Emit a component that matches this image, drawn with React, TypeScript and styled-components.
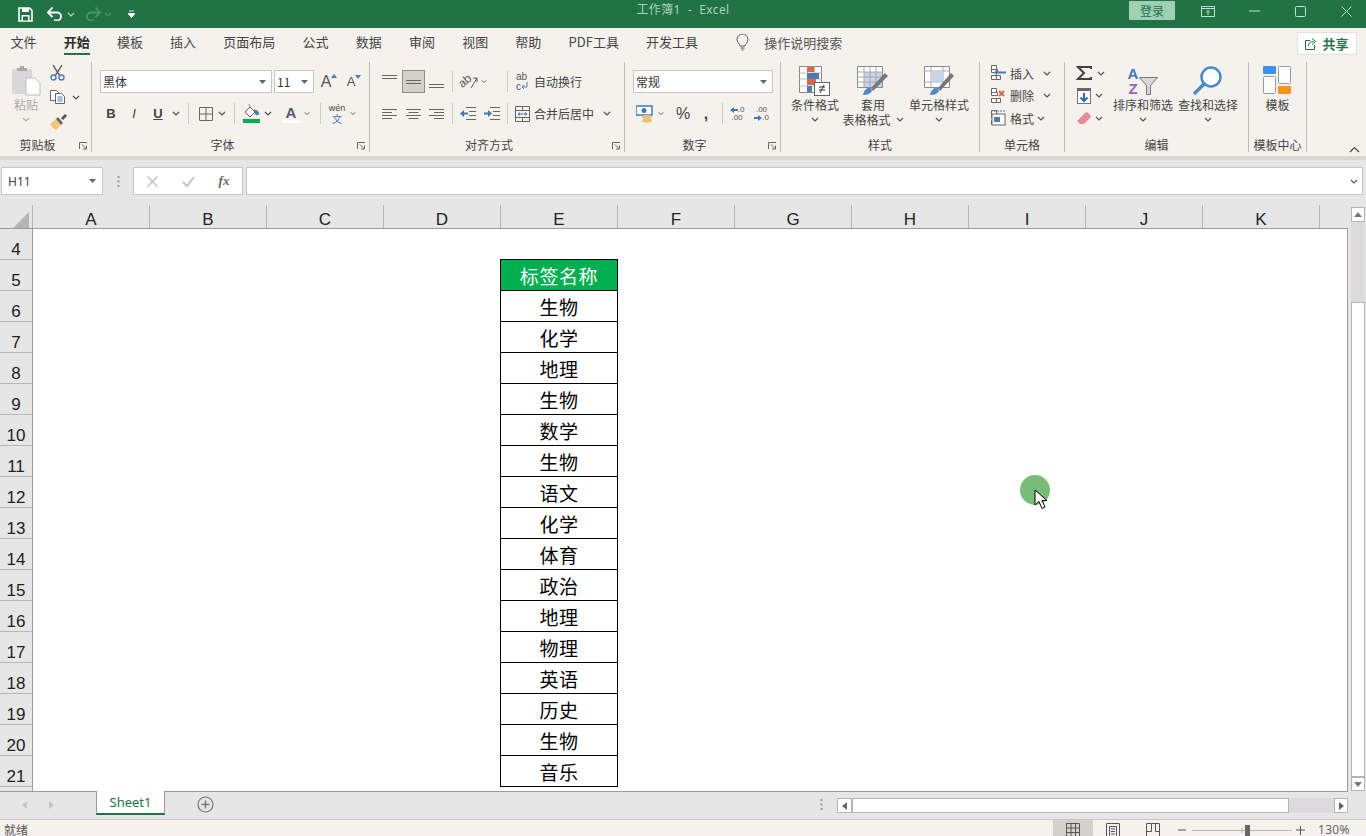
import React from 'react';
import styled, { createGlobalStyle } from 'styled-components';

const UI_FONT = '"Noto Sans", "Noto Sans CJK SC", sans-serif';
const CJK_FONT = '"Noto Sans CJK SC", "Noto Sans", sans-serif';

const GlobalStyle = createGlobalStyle`
    html, body {
        margin: 0;
        padding: 0;
        background: #e6e6e6;
        overflow: hidden;
    }
    * {
        box-sizing: border-box;
    }
`;

const Page = styled.div`
    position: relative;
    width: 1366px;
    height: 836px;
    display: flex;
    flex-direction: column;
    overflow: hidden;
    font-family: ${CJK_FONT};
    color: #444;
`;

/* title bar */
const TitleBar = styled.div`
    height: 28px;
    flex: none;
    display: grid;
    grid-template-columns: 1fr auto 1fr;
    align-items: center;
    background: #217346;
`;

const QuickAccess = styled.div`
    display: flex;
    align-items: center;
    padding-left: 18px;
`;

const QuickSlot = styled.span<{ $w: number; $ml?: number }>`
    display: inline-flex;
    justify-content: center;
    align-items: center;
    width: ${(p) => p.$w}px;
    margin-left: ${(p) => p.$ml ?? 0}px;
`;

const TitleText = styled.div`
    font-family: ${UI_FONT};
    font-size: 12px;
    line-height: 20px;
    letter-spacing: 0.4px;
    color: #a8d2bc;
    white-space: pre;
    margin-top: -8px;
`;

const WindowControls = styled.div`
    display: flex;
    align-items: flex-start;
    justify-content: flex-end;
    height: 28px;
    padding-top: 1px;
    margin-right: -3px;
`;

const LoginButton = styled.div`
    width: 46px;
    height: 19px;
    margin-right: 10px;
    border-radius: 1px;
    background: #9fd0b5;
    color: #217346;
    font-size: 12px;
    line-height: 19px;
    text-align: center;
`;

const WindowButton = styled.span`
    width: 46px;
    height: 20px;
    flex: none;
    display: inline-flex;
    align-items: center;
    justify-content: center;
`;

/* tab row */
const TabRow = styled.div`
    height: 30px;
    flex: none;
    display: flex;
    align-items: flex-start;
    padding-left: 10.5px;
    background: #f5f2ee;
`;

const Tab = styled.div<{ $active?: boolean }>`
    margin-right: 27.2px;
    height: 27px;
    font-size: 13px;
    line-height: 28px;
    white-space: nowrap;
    color: ${(p) => (p.$active ? '#2b2b2b' : '#444')};
    font-weight: ${(p) => (p.$active ? 700 : 400)};
    border-bottom: 2px solid ${(p) => (p.$active ? '#217346' : 'transparent')};
`;

const SearchHint = styled.div`
    display: flex;
    align-items: center;
    gap: 15px;
    margin-left: 11px;
    height: 29px;
    font-size: 13px;
    color: #555;
`;

const ShareButton = styled.div`
    margin-left: auto;
    margin-right: 9px;
    margin-top: 4px;
    width: 60px;
    height: 23px;
    display: flex;
    align-items: center;
    justify-content: center;
    gap: 5px;
    background: #fff;
    border: 1px solid #eadfdf;
    color: #217346;
    font-size: 13px;
    font-weight: 700;
`;

/* ribbon */
const Ribbon = styled.div`
    height: 98px;
    flex: none;
    display: flex;
    padding-top: 4px;
    background: #f5f2ee;
`;

const Group = styled.div<{ $w: number }>`
    width: ${(p) => p.$w}px;
    height: 90px;
    flex: none;
    display: flex;
    flex-direction: column;
    border-right: 1px solid #bdbbb8;
`;

const GroupBody = styled.div<{ $row?: boolean }>`
    height: 75px;
    display: flex;
    flex-direction: ${(p) => (p.$row ? 'row' : 'column')};
`;

const GroupFooter = styled.div`
    height: 15px;
    display: flex;
    align-items: center;
    font-size: 12px;
    line-height: 15px;
    color: #444;
`;

const GroupLabel = styled.span`
    flex: 1;
    text-align: center;
    white-space: nowrap;
`;

const Launcher = styled.span`
    width: 16px;
    display: inline-flex;
    justify-content: center;
    padding-top: 3px;
`;

const CollapseSlot = styled.div`
    flex: 1;
    display: flex;
    align-items: flex-end;
    justify-content: flex-end;
    padding: 0 6px 3px 0;
`;

const ToolRows = styled.div<{ $top?: number; $gap?: number }>`
    display: flex;
    flex-direction: column;
    padding-top: ${(p) => p.$top ?? 8}px;
    gap: ${(p) => p.$gap ?? 9}px;
`;

const ToolRow = styled.div<{ $ml?: number; $h?: number }>`
    display: flex;
    align-items: center;
    height: ${(p) => p.$h ?? 23}px;
    padding-left: ${(p) => p.$ml ?? 0}px;
`;

const Tool = styled.span<{ $w: number; $ml?: number; $active?: boolean }>`
    flex: none;
    width: ${(p) => p.$w}px;
    height: 23px;
    margin-left: ${(p) => p.$ml ?? 0}px;
    display: inline-flex;
    align-items: center;
    justify-content: center;
    background: ${(p) => (p.$active ? '#d3d1cc' : 'transparent')};
    border: 1px solid ${(p) => (p.$active ? '#8f8e8a' : 'transparent')};
`;

const LetterTool = styled(Tool)<{ $bold?: boolean; $italic?: boolean; $under?: boolean; $size?: number }>`
    font-family: "Liberation Sans", sans-serif;
    font-size: ${(p) => p.$size ?? 13}px;
    color: #444;
    font-weight: ${(p) => (p.$bold ? 700 : 400)};
    font-style: ${(p) => (p.$italic ? 'italic' : 'normal')};
    text-decoration: ${(p) => (p.$under ? 'underline' : 'none')};
`;

/* small letters that are part of a ribbon icon */
const GlyphStack = styled.span<{ $align?: string; $gap?: number }>`
    display: inline-flex;
    flex-direction: column;
    align-items: ${(p) => p.$align ?? 'center'};
    gap: ${(p) => p.$gap ?? 0}px;
`;

const GlyphLine = styled.span`
    display: inline-flex;
    align-items: flex-start;
`;

const Glyph = styled.span<{ $size: number; $color?: string; $bold?: boolean; $cjk?: boolean; $tilt?: number }>`
    font-family: ${(p) => (p.$cjk ? CJK_FONT : '"Liberation Sans", sans-serif')};
    font-size: ${(p) => p.$size}px;
    line-height: ${(p) => p.$size}px;
    color: ${(p) => p.$color ?? '#555'};
    font-weight: ${(p) => (p.$bold ? 700 : 400)};
    transform: ${(p) => (p.$tilt ? `rotate(${p.$tilt}deg)` : 'none')};
    white-space: nowrap;
`;

const VSep = styled.span<{ $ml: number; $mr: number }>`
    flex: none;
    width: 1px;
    height: 21px;
    margin-left: ${(p) => p.$ml}px;
    margin-right: ${(p) => p.$mr}px;
    background: #cfcdc9;
`;

const ComboBox = styled.div<{ $w: number; $ml?: number }>`
    width: ${(p) => p.$w}px;
    height: 23px;
    margin-left: ${(p) => p.$ml ?? 0}px;
    display: flex;
    align-items: center;
    justify-content: space-between;
    padding: 0 5px 0 2px;
    background: #fff;
    border: 1px solid #c6c6c6;
    font-size: 12px;
    color: #333;
`;

const WordTool = styled.span<{ $ml?: number; $gap?: number }>`
    display: inline-flex;
    align-items: center;
    gap: ${(p) => p.$gap ?? 4}px;
    margin-left: ${(p) => p.$ml ?? 0}px;
    font-size: 12px;
    white-space: nowrap;
    color: #444;
`;

const ChevronSlot = styled.span<{ $ml?: number }>`
    display: inline-flex;
    width: 8px;
    justify-content: center;
    margin-left: ${(p) => p.$ml ?? 0}px;
`;

const LargeButton = styled.div<{ $w: number; $ml?: number; $dim?: boolean }>`
    width: ${(p) => p.$w}px;
    flex: none;
    margin-left: ${(p) => p.$ml ?? 0}px;
    padding-top: 4px;
    display: flex;
    flex-direction: column;
    align-items: center;
    font-size: 12px;
    line-height: 15px;
    white-space: nowrap;
    color: ${(p) => (p.$dim ? '#a9a9a9' : '#444')};
`;

const LargeIcon = styled.div`
    height: 30px;
    margin-bottom: 1px;
    display: flex;
    align-items: flex-start;
    justify-content: center;
`;

const SortIcon = styled.div`
    display: flex;
    align-items: flex-end;
    gap: 1px;
    height: 30px;
`;

const LabelLine = styled.div`
    height: 15px;
    display: flex;
    align-items: center;
    gap: 5px;
`;

const ClipColumn = styled.div`
    display: flex;
    flex-direction: column;
    padding: 0 0 0 1px;
    gap: 3.5px;
`;

const ClipRow = styled.div`
    height: 21px;
    display: flex;
    align-items: center;
    gap: 6px;
`;

/* formula bar */
const Shadow = styled.div`
    height: 4px;
    flex: none;
    background: #d9d6d2;
`;

const FormulaBar = styled.div`
    height: 45px;
    flex: none;
    display: flex;
    align-items: flex-start;
    padding: 7px 3px 0 1px;
    background: #e6e6e6;
`;

const NameBox = styled.div`
    width: 102px;
    height: 28px;
    display: flex;
    align-items: center;
    justify-content: space-between;
    padding: 0 6px;
    background: #fff;
    border: 1px solid #c6c6c6;
    font-family: ${UI_FONT};
    font-size: 12px;
    color: #444;
`;

const GripSlot = styled.div`
    width: 30px;
    height: 28px;
    display: flex;
    align-items: center;
    justify-content: center;
`;

const FormulaButtons = styled.div`
    width: 110px;
    height: 28px;
    display: grid;
    grid-template-columns: repeat(3, 36px);
    align-items: center;
    justify-items: center;
    background: #fff;
    border: 1px solid #c6c6c6;
`;

const FxText = styled.span`
    font-family: "Liberation Serif", serif;
    font-style: italic;
    font-weight: 700;
    font-size: 13px;
    color: #666;
`;

const FormulaInput = styled.div`
    flex: 1;
    height: 28px;
    margin-left: 3px;
    display: flex;
    align-items: center;
    justify-content: flex-end;
    padding-right: 4px;
    background: #fff;
    border: 1px solid #c6c6c6;
`;

/* sheet */
const SheetArea = styled.div`
    height: 587px;
    flex: none;
    display: flex;
    background: #e6e6e6;
`;

const SheetMain = styled.div`
    width: 1348px;
    display: flex;
    flex-direction: column;
`;

const ColumnHeader = styled.div`
    height: 24px;
    flex: none;
    display: flex;
    border-bottom: 1px solid #9c9c9c;
`;

const Corner = styled.div`
    width: 33px;
    flex: none;
    padding: 4px 0 0 13px;
    border-right: 1px solid #b5b5b5;
`;

const ColumnCell = styled.div<{ $w: number }>`
    width: ${(p) => p.$w}px;
    flex: none;
    padding-top: 5px;
    text-align: center;
    font-family: "Liberation Sans", sans-serif;
    font-size: 17px;
    line-height: 20px;
    color: #222;
    border-right: 1px solid #b5b5b5;
`;

const SheetBody = styled.div`
    flex: 1;
    display: flex;
    overflow: hidden;
    border-bottom: 1px solid #9c9c9c;
`;

const RowHeader = styled.div`
    width: 33px;
    flex: none;
    border-right: 1px solid #9c9c9c;
`;

const RowCell = styled.div`
    height: 31px;
    flex: none;
    display: flex;
    align-items: flex-end;
    justify-content: center;
    font-family: "Liberation Sans", sans-serif;
    font-size: 17px;
    line-height: 18px;
    color: #222;
    border-bottom: 1px solid #b8b8b8;
`;

const Canvas = styled.div`
    flex: 1;
    padding: 30px 0 0 467px;
    background: #fff;
    border-right: 1px solid #9c9c9c;
`;

const DataTable = styled.div`
    width: 118px;
    border: 1px solid #000;
    border-bottom: 0;
`;

const DataCell = styled.div<{ $head?: boolean }>`
    height: 31px;
    display: flex;
    align-items: center;
    justify-content: center;
    border-bottom: 1px solid #000;
    font-size: 19px;
    letter-spacing: ${(p) => (p.$head ? '0.6px' : '0.5px')};
    background: ${(p) => (p.$head ? '#00b050' : '#fff')};
    color: ${(p) => (p.$head ? '#fff' : '#000')};
`;

const VScroll = styled.div`
    width: 18px;
    flex: none;
    display: flex;
    flex-direction: column;
    padding: 2px 1px 1px 3px;
`;

const ScrollButton = styled.div<{ $w?: number; $h?: number }>`
    width: ${(p) => (p.$w ? `${p.$w}px` : '100%')};
    height: ${(p) => (p.$h ? `${p.$h}px` : '100%')};
    flex: none;
    display: flex;
    align-items: center;
    justify-content: center;
    background: #fff;
    border: 1px solid #b5b5b5;
`;

const ScrollTrack = styled.div<{ $flex: number }>`
    flex: ${(p) => p.$flex};
    background: #dcdadc;
`;

const ScrollThumb = styled.div<{ $flex: number }>`
    flex: ${(p) => p.$flex};
    background: #fff;
    border: 1px solid #b5b5b5;
`;

/* sheet tabs */
const SheetTabs = styled.div`
    height: 28px;
    flex: none;
    display: flex;
    align-items: flex-start;
    background: #e6e6e6;
    border-bottom: 1px solid #c6c6c6;
`;

const TabNav = styled.div`
    width: 96px;
    height: 26px;
    display: flex;
    align-items: center;
    gap: 22px;
    padding-left: 22px;
`;

const SheetTab = styled.div`
    width: 69px;
    height: 24px;
    background: #fff;
    border-left: 1px solid #9c9c9c;
    border-right: 1px solid #9c9c9c;
    border-bottom: 2px solid #217346;
    margin-top: -1px;
    text-align: center;
    font-family: ${UI_FONT};
    font-size: 13px;
    line-height: 23px;
    color: #217346;
`;

const AddSheet = styled.span`
    display: inline-flex;
    margin: 4px 0 0 32px;
`;

const GripRight = styled.span`
    display: inline-flex;
    margin: 7px 0 0 606px;
`;

const HScroll = styled.div`
    width: 511px;
    height: 15px;
    display: flex;
    margin: 6px 0 0 14px;
`;

/* status bar */
const StatusBar = styled.div`
    height: 16px;
    flex: none;
    display: flex;
    align-items: flex-start;
    overflow: hidden;
    padding-left: 4px;
    background: linear-gradient(#f5f2ee 70%, #f7efef);
    font-size: 12px;
    line-height: 20px;
    color: #555;
`;

const StatusRight = styled.div`
    margin-left: auto;
    display: flex;
    align-items: flex-start;
    height: 16px;
`;

const ViewButton = styled.span<{ $active?: boolean }>`
    width: 40px;
    height: 16px;
    display: inline-flex;
    justify-content: center;
    padding-top: 3px;
    background: ${(p) => (p.$active ? '#d3d1cc' : 'transparent')};
`;

const ZoomSlider = styled.div`
    display: flex;
    align-items: flex-start;
    margin: 0 12px 0 5px;
    padding-top: 5px;
`;

const ZoomText = styled.span`
    width: 48px;
    font-family: ${UI_FONT};
    font-size: 12px;
    line-height: 20px;
    letter-spacing: 0.3px;
    color: #666;
`;

/* recording cursor lies over the sheet */
const ClickMark = styled.div`
    position: absolute;
    left: 1020px;
    top: 475px;
    width: 30px;
    height: 30px;
    border-radius: 50%;
    background: #78bc78;
`;

const CursorMark = styled.svg`
    position: absolute;
    left: 1034px;
    top: 489px;
`;

const Chevron: React.FC<{ color?: string }> = ({ color = '#555' }) => (
    <svg width="8" height="5" viewBox="0 0 8 5">
        <path d="M1 1l3 3 3-3" fill="none" stroke={color} strokeWidth="1.2" />
    </svg>
);

const Caret: React.FC<{ color?: string }> = ({ color = '#666' }) => (
    <svg width="7" height="4" viewBox="0 0 7 4">
        <path d="M0 0h7L3.5 4z" fill={color} />
    </svg>
);

const LauncherIcon = () => (
    <svg width="9" height="8" viewBox="0 0 9 8">
        <path d="M.5 7V.5H8M3 2.5l4 4M7.5 3.5v3.500H4" fill="none" stroke="#666" strokeWidth="1" />
    </svg>
);

const Lines: React.FC<{ widths: number[]; offs?: number[]; y?: number; gap?: number }> = ({
    widths,
    offs = [0, 0, 0, 0],
    y = 1.5,
    gap = 3,
}) => (
    <svg width="16" height="16" viewBox="0 0 16 16">
        {widths.map((w, i) => (w ? <rect key={i} x={offs[i]} y={y + i * gap} width={w} height="1" fill="#666" /> : null))}
    </svg>
);

const SmallGridIcon: React.FC<{ badge: 'insert' | 'delete' | 'format' }> = ({ badge }) => (
    <svg width="15" height="16" viewBox="0 0 15 16">
        <path d="M.5 4.500h6v3h-6zM.5 10.500h5v4h-5zM5.500 10.500h4v4h-4zM.5.5h5v4h-5z" fill="#fff" stroke="#666" />
        {badge === 'insert' && <path d="M3 7.500l3-3v2h9v2H6v2z" fill="#4a7db8" />}
        {badge === 'delete' && <path d="M8 3l5 5M13 3l-5 5" stroke="#e0604a" strokeWidth="2" />}
        {badge === 'format' && (
            <>
                <path d="M0 1h15" stroke="#4a7db8" strokeDasharray="2 1" />
                <rect x="1" y="4" width="13" height="11" fill="#fff" stroke="#666" />
                <rect x="3" y="7" width="6" height="5" fill="#4a7db8" />
            </>
        )}
    </svg>
);

const tabs = ['文件', '开始', '模板', '插入', '页面布局', '公式', '数据', '审阅', '视图', '帮助', 'PDF工具', '开发工具'];
const columns = ['A', 'B', 'C', 'D', 'E', 'F', 'G', 'H', 'I', 'J', 'K'];
const rowNumbers = [4, 5, 6, 7, 8, 9, 10, 11, 12, 13, 14, 15, 16, 17, 18, 19, 20, 21, 22];
const subjects = ['生物', '化学', '地理', '生物', '数学', '生物', '语文', '化学', '体育', '政治', '地理', '物理', '英语', '历史', '生物', '音乐'];

const App: React.FC = () => {
    return (
        <Page>
            <GlobalStyle />
            <TitleBar>
                <QuickAccess>
                    <QuickSlot $w={15}>
                        <svg width="15" height="15" viewBox="0 0 15 15">
                            <path d="M1 1h10.500L14 3.500V14H1z" fill="none" stroke="#fff" strokeWidth="1.6" />
                            <rect x="4" y="1" width="7" height="4" fill="#fff" />
                            <rect x="3.500" y="8" width="8" height="6" fill="#fff" />
                            <rect x="5" y="9.500" width="5" height="4" fill="#217346" />
                        </svg>
                    </QuickSlot>
                    <QuickSlot $w={16} $ml={14}>
                        <svg width="16" height="14" viewBox="0 0 16 14">
                            <path d="M1 5.500h9a4 4 0 0 1 0 8H7" fill="none" stroke="#fff" strokeWidth="1.800" />
                            <path d="M5.500.5L1 5.500l4.500 4.500" fill="none" stroke="#fff" strokeWidth="1.800" />
                        </svg>
                    </QuickSlot>
                    <QuickSlot $w={8} $ml={4}>
                        <Chevron color="#b5d6c5" />
                    </QuickSlot>
                    <QuickSlot $w={16} $ml={10}>
                        <svg width="16" height="14" viewBox="0 0 16 14">
                            <path d="M15 5.500H6a4 4 0 0 0 0 8h3" fill="none" stroke="#4c9070" strokeWidth="1.800" />
                            <path d="M10.500.5L15 5.500 10.500 10" fill="none" stroke="#4c9070" strokeWidth="1.800" />
                        </svg>
                    </QuickSlot>
                    <QuickSlot $w={8} $ml={3}>
                        <Chevron color="#4c9070" />
                    </QuickSlot>
                    <QuickSlot $w={8} $ml={15}>
                        <svg width="7" height="8" viewBox="0 0 7 8">
                            <path d="M1 1h5M0 3.500h7L3.500 7.500z" stroke="#fff" fill="#fff" strokeWidth=".8" />
                        </svg>
                    </QuickSlot>
                </QuickAccess>
                <TitleText>工作簿1  -  Excel</TitleText>
                <WindowControls>
                    <LoginButton>登录</LoginButton>
                    <WindowButton>
                        <svg width="14" height="11" viewBox="0 0 14 11">
                            <path d="M.5.5h13v10H.5zM.5 2.500h13M7 9V4.500M5 6.500l2-2 2 2" fill="none" stroke="#c5e0d2" />
                        </svg>
                    </WindowButton>
                    <WindowButton>
                        <svg width="11" height="2" viewBox="0 0 11 2">
                            <path d="M0 1h11" stroke="#c5e0d2" />
                        </svg>
                    </WindowButton>
                    <WindowButton>
                        <svg width="11" height="11" viewBox="0 0 11 11">
                            <rect x=".5" y=".5" width="10" height="10" rx="1" fill="none" stroke="#c5e0d2" />
                        </svg>
                    </WindowButton>
                    <WindowButton>
                        <svg width="11" height="11" viewBox="0 0 11 11">
                            <path d="M.5.5l10 10M10.500.5l-10 10" stroke="#c5e0d2" />
                        </svg>
                    </WindowButton>
                </WindowControls>
            </TitleBar>

            <TabRow>
                {tabs.map((tab) => (
                    <Tab key={tab} $active={tab === '开始'}>
                        {tab}
                    </Tab>
                ))}
                <SearchHint>
                    <svg width="13" height="17" viewBox="0 0 13 17">
                        <path d="M4 12c0-2-3-3.500-3-6.500a5.500 5.500 0 0 1 11 0c0 3-3 4.500-3 6.500zM4.500 14h4M5.500 16h2" fill="none" stroke="#555" />
                    </svg>
                    <span>操作说明搜索</span>
                </SearchHint>
                <ShareButton>
                    <svg width="12" height="12" viewBox="0 0 12 12">
                        <path d="M5 2.500H.5v9h9V7M3.500 8c0-3 2-4.500 5-4.500M7 .5l3.500 3L7 6.500" fill="none" stroke="#217346" />
                    </svg>
                    <span>共享</span>
                </ShareButton>
            </TabRow>

            <Ribbon>
                <Group $w={92}>
                    <GroupBody $row>
                        <LargeButton $w={46} $ml={3} $dim>
                            <LargeIcon>
                                <svg width="30" height="30" viewBox="0 0 30 30">
                                    <rect x="1" y="3" width="20" height="25" rx="1.500" fill="#d8d8db" />
                                    <path d="M6 5h10V2h-3V0H9v2H6z" fill="#a8a8a8" />
                                    <path d="M15 12h9l5 5v12H15z" fill="#fff" stroke="#bbb" />
                                </svg>
                            </LargeIcon>
                            <LabelLine>粘贴</LabelLine>
                            <LabelLine>
                                <Chevron color="#aaa" />
                            </LabelLine>
                        </LargeButton>
                        <ClipColumn>
                            <ClipRow>
                                <svg width="15" height="16" viewBox="0 0 15 16">
                                    <path d="M3 0l7 11M12 0L5 11" stroke="#666" strokeWidth="1.400" />
                                    <circle cx="3.500" cy="12.500" r="2.500" fill="none" stroke="#4a7db8" strokeWidth="1.400" />
                                    <circle cx="11.500" cy="12.500" r="2.500" fill="none" stroke="#4a7db8" strokeWidth="1.400" />
                                </svg>
                            </ClipRow>
                            <ClipRow>
                                <svg width="16" height="14" viewBox="0 0 16 14">
                                    <path d="M.5.5h6l3 3v7h-9z" fill="#fff" stroke="#666" />
                                    <path d="M5.500 3.500h6l3 3v7h-9z" fill="#fff" stroke="#666" />
                                    <path d="M7.500 7h5M7.500 9h5M7.500 11h5" stroke="#4a7db8" />
                                </svg>
                                <Chevron />
                            </ClipRow>
                            <ClipRow>
                                <svg width="17" height="16" viewBox="0 0 17 16">
                                    <path d="M0 10l6-5 5 6-5 5c-2-1-5-3-6-6z" fill="#f2c57c" />
                                    <path d="M6 5l5 6 2-2-5-6z" fill="#666" />
                                    <path d="M11 4l4-4 2 2-4 4z" fill="#555" />
                                </svg>
                            </ClipRow>
                        </ClipColumn>
                    </GroupBody>
                    <GroupFooter>
                        <GroupLabel>剪贴板</GroupLabel>
                        <Launcher>
                            <LauncherIcon />
                        </Launcher>
                    </GroupFooter>
                </Group>

                <Group $w={278}>
                    <GroupBody>
                        <ToolRows>
                            <ToolRow $ml={8}>
                                <ComboBox $w={172}>
                                    <span>黑体</span>
                                    <Caret />
                                </ComboBox>
                                <ComboBox $w={40} $ml={2}>
                                    <span>11</span>
                                    <Caret />
                                </ComboBox>
                                <Tool $w={22} $ml={4}>
                                    <GlyphLine>
                                        <Glyph $size={16}>A</Glyph>
                                        <svg width="6" height="4" viewBox="0 0 6 4">
                                            <path d="M0 4l3-4 3 4z" fill="#4a7db8" />
                                        </svg>
                                    </GlyphLine>
                                </Tool>
                                <Tool $w={22} $ml={3}>
                                    <GlyphLine>
                                        <Glyph $size={13}>A</Glyph>
                                        <svg width="6" height="4" viewBox="0 0 6 4">
                                            <path d="M0 0l3 4 3-4z" fill="#4a7db8" />
                                        </svg>
                                    </GlyphLine>
                                </Tool>
                            </ToolRow>
                            <ToolRow $ml={8}>
                                <LetterTool $w={22} $bold>B</LetterTool>
                                <LetterTool $w={24} $italic>I</LetterTool>
                                <LetterTool $w={24} $bold $under>U</LetterTool>
                                <Tool $w={12}><Chevron /></Tool>
                                <VSep $ml={6} $mr={6} />
                                <Tool $w={21}>
                                    <svg width="14" height="14" viewBox="0 0 14 14">
                                        <path d="M.5.5h13v13H.5zM7 .5v13M.5 7h13" fill="none" stroke="#666" />
                                    </svg>
                                </Tool>
                                <Tool $w={12}><Chevron /></Tool>
                                <VSep $ml={6} $mr={6} />
                                <Tool $w={21}>
                                    <svg width="17" height="19" viewBox="0 0 17 19">
                                        <path d="M2 8l5-5 5 5-5 5z" fill="#fff" stroke="#666" />
                                        <path d="M6 0l1 4M11 6c3 0 5 2 5 4l-3 1z" stroke="#666" fill="#4a7db8" strokeWidth=".7" />
                                        <rect x="0" y="15" width="17" height="4" fill="#00b050" />
                                    </svg>
                                </Tool>
                                <Tool $w={12}><Chevron /></Tool>
                                <Tool $w={24} $ml={5}>
                                    <GlyphStack>
                                        <Glyph $size={15} $bold $color="#56596e">A</Glyph>
                                        <svg width="17" height="3" viewBox="0 0 17 3">
                                            <rect width="17" height="3" fill="#fff" />
                                        </svg>
                                    </GlyphStack>
                                </Tool>
                                <Tool $w={8}><Chevron /></Tool>
                                <VSep $ml={9} $mr={4} />
                                <Tool $w={24}>
                                    <GlyphStack $gap={1}>
                                        <Glyph $size={9} $color="#444">wén</Glyph>
                                        <Glyph $size={10} $cjk $color="#3f78bb">文</Glyph>
                                    </GlyphStack>
                                </Tool>
                                <Tool $w={8}><Chevron /></Tool>
                            </ToolRow>
                        </ToolRows>
                    </GroupBody>
                    <GroupFooter>
                        <GroupLabel>字体</GroupLabel>
                        <Launcher>
                            <LauncherIcon />
                        </Launcher>
                    </GroupFooter>
                </Group>

                <Group $w={255}>
                    <GroupBody>
                        <ToolRows>
                            <ToolRow $ml={8}>
                                <Tool $w={24}><Lines widths={[15, 15]} y={1} /></Tool>
                                <Tool $w={23} $active><Lines widths={[15, 15]} y={6} /></Tool>
                                <Tool $w={24}><Lines widths={[15, 15]} y={10} /></Tool>
                                <VSep $ml={3} $mr={3} />
                                <Tool $w={24}>
                                    <GlyphLine>
                                        <Glyph $size={12} $tilt={-40}>ab</Glyph>
                                        <svg width="7" height="14" viewBox="0 0 7 14">
                                            <path d="M0 13L6 3M6 3H2M6 3v4" fill="none" stroke="#555" />
                                        </svg>
                                    </GlyphLine>
                                </Tool>
                                <Tool $w={8}><Chevron /></Tool>
                                <VSep $ml={19} $mr={8} />
                                <WordTool $gap={6}>
                                    <GlyphStack $align="flex-start">
                                        <Glyph $size={10}>ab</Glyph>
                                        <GlyphLine>
                                            <Glyph $size={10}>c</Glyph>
                                            <svg width="7" height="9" viewBox="0 0 7 9">
                                                <path d="M6 0v5H1M3 3L1 5l2 2" fill="none" stroke="#4a7db8" />
                                            </svg>
                                        </GlyphLine>
                                    </GlyphStack>
                                    自动换行
                                </WordTool>
                            </ToolRow>
                            <ToolRow $ml={8}>
                                <Tool $w={24}><Lines widths={[15, 10, 15, 10]} y={3} /></Tool>
                                <Tool $w={23}><Lines widths={[15, 10, 15, 10]} offs={[0, 2.5, 0, 2.5]} y={3} /></Tool>
                                <Tool $w={24}><Lines widths={[15, 10, 15, 10]} offs={[0, 5, 0, 5]} y={3} /></Tool>
                                <VSep $ml={3} $mr={3} />
                                <Tool $w={24}>
                                    <svg width="16" height="13" viewBox="0 0 16 13">
                                        <path d="M6 .5h10M9 4.500h7M9 8.500h7M6 12.500h10" stroke="#666" />
                                        <path d="M0 6.500l4-3.500v2.500h4v2H4V10z" fill="#3f78bb" />
                                    </svg>
                                </Tool>
                                <Tool $w={24}>
                                    <svg width="16" height="13" viewBox="0 0 16 13">
                                        <path d="M6 .5h10M9 4.500h7M9 8.500h7M6 12.500h10" stroke="#666" />
                                        <path d="M8 6.500L4 3v2.500H0v2h4V10z" fill="#3f78bb" />
                                    </svg>
                                </Tool>
                                <VSep $ml={3} $mr={7} />
                                <WordTool $gap={4}>
                                    <svg width="15" height="16" viewBox="0 0 15 16">
                                        <path d="M.5.5h14v15H.5zM.5 4.500h14M.5 11.500h14M7.500.5v4M7.500 11.500v4" fill="none" stroke="#666" />
                                        <path d="M3 8h9M3 8l2-1.500M3 8l2 1.500M12 8l-2-1.500M12 8l-2 1.500" fill="none" stroke="#3f78bb" />
                                    </svg>
                                    合并后居中
                                </WordTool>
                                <ChevronSlot $ml={9}><Chevron /></ChevronSlot>
                            </ToolRow>
                        </ToolRows>
                    </GroupBody>
                    <GroupFooter>
                        <GroupLabel>对齐方式</GroupLabel>
                        <Launcher>
                            <LauncherIcon />
                        </Launcher>
                    </GroupFooter>
                </Group>

                <Group $w={156}>
                    <GroupBody>
                        <ToolRows>
                            <ToolRow>
                                <ComboBox $w={140} $ml={8}>
                                    <span>常规</span>
                                    <Caret />
                                </ComboBox>
                            </ToolRow>
                            <ToolRow $ml={8}>
                                <Tool $w={22}>
                                    <svg width="17" height="18" viewBox="0 0 17 18">
                                        <rect x="0" y="1" width="16" height="9" fill="#fff" stroke="#3f78bb" strokeWidth="1.500" />
                                        <circle cx="8" cy="5.500" r="2.500" fill="#3f78bb" />
                                        <ellipse cx="11" cy="12" rx="5" ry="2" fill="#f0c277" />
                                        <ellipse cx="11" cy="15.500" rx="5" ry="2" fill="#f0c277" />
                                    </svg>
                                </Tool>
                                <Tool $w={8} $ml={2}><Chevron /></Tool>
                                <LetterTool $w={26} $ml={5} $size={16}>%</LetterTool>
                                <LetterTool $w={20} $bold $size={16}>,</LetterTool>
                                <VSep $ml={6} $mr={0} />
                                <Tool $w={28}>
                                    <GlyphStack>
                                        <GlyphLine>
                                            <svg width="8" height="8" viewBox="0 0 8 8">
                                                <path d="M0 4l4-3v2h4v2H4v2z" fill="#3f78bb" />
                                            </svg>
                                            <Glyph $size={8}>.0</Glyph>
                                        </GlyphLine>
                                        <Glyph $size={8}>.00</Glyph>
                                    </GlyphStack>
                                </Tool>
                                <Tool $w={21}>
                                    <GlyphStack>
                                        <Glyph $size={8}>.00</Glyph>
                                        <GlyphLine>
                                            <svg width="8" height="8" viewBox="0 0 8 8">
                                                <path d="M8 4L4 1v2H0v2h4v2z" fill="#3f78bb" />
                                            </svg>
                                            <Glyph $size={8}>.0</Glyph>
                                        </GlyphLine>
                                    </GlyphStack>
                                </Tool>
                            </ToolRow>
                        </ToolRows>
                    </GroupBody>
                    <GroupFooter>
                        <GroupLabel>数字</GroupLabel>
                        <Launcher>
                            <LauncherIcon />
                        </Launcher>
                    </GroupFooter>
                </Group>

                <Group $w={199}>
                    <GroupBody $row>
                        <LargeButton $w={56} $ml={6}>
                            <LargeIcon>
                                <svg width="32" height="30" viewBox="0 0 32 30">
                                    <path d="M.5.5h22v26H.5z" fill="#fff" stroke="#888" />
                                    <path d="M8.500.5v26M15.500.5v26M.5 7h22M.5 13h22M.5 20h22" stroke="#bbb" />
                                    <rect x="8" y="1" width="7" height="5" fill="#e0664a" />
                                    <rect x="8" y="7" width="12" height="6" fill="#4a7db8" />
                                    <rect x="8" y="13" width="9" height="6" fill="#e0664a" />
                                    <rect x="8" y="20" width="5" height="6" fill="#4a7db8" />
                                    <rect x="15.500" y="16.500" width="15" height="13" fill="#fff" stroke="#666" />
                                    <path d="M20 21h6M20 24h6M25 19l-4 8" stroke="#333" />
                                </svg>
                            </LargeIcon>
                            <LabelLine>条件格式</LabelLine>
                            <LabelLine><Chevron /></LabelLine>
                        </LargeButton>
                        <LargeButton $w={60}>
                            <LargeIcon>
                                <svg width="32" height="30" viewBox="0 0 32 30">
                                    <path d="M.5.5h25v21H.5z" fill="#fff" stroke="#888" />
                                    <rect x="7" y="6" width="18" height="15" fill="#c7d3e8" />
                                    <path d="M7 .5v21M13 .5v21M19 .5v21M.5 6h25M.5 11h25M.5 16h25" stroke="#aaa" />
                                    <path d="M6 29c1-5 4-8 8-7l1 3c-2 3-5 4-9 4z" fill="#4a8bc8" />
                                    <path d="M14 22L28 7l3 3-15 15z" fill="#777" />
                                </svg>
                            </LargeIcon>
                            <LabelLine>套用</LabelLine>
                            <LabelLine>表格格式<Chevron /></LabelLine>
                        </LargeButton>
                        <LargeButton $w={60} $ml={6}>
                            <LargeIcon>
                                <svg width="31" height="30" viewBox="0 0 31 30">
                                    <path d="M.5.5h25v21H.5z" fill="#fff" stroke="#888" />
                                    <path d="M.5 5h25M7 .5v21M19 .5v21M.5 16h25" stroke="#aaa" />
                                    <rect x="7" y="5" width="12" height="11" fill="#c7d3e8" />
                                    <path d="M6 29c1-5 4-8 8-7l1 3c-2 3-5 4-9 4z" fill="#4a8bc8" />
                                    <path d="M14 22L27 7l3 3-14 15z" fill="#777" />
                                </svg>
                            </LargeIcon>
                            <LabelLine>单元格样式</LabelLine>
                            <LabelLine><Chevron /></LabelLine>
                        </LargeButton>
                    </GroupBody>
                    <GroupFooter>
                        <GroupLabel>样式</GroupLabel>
                    </GroupFooter>
                </Group>

                <Group $w={85}>
                    <GroupBody>
                        <ToolRows $top={0} $gap={0}>
                            <ToolRow $ml={11} $h={22.5}>
                                <WordTool>
                                    <SmallGridIcon badge="insert" />
                                    插入
                                </WordTool>
                                <ChevronSlot $ml={9}><Chevron /></ChevronSlot>
                            </ToolRow>
                            <ToolRow $ml={11} $h={22.5}>
                                <WordTool>
                                    <SmallGridIcon badge="delete" />
                                    删除
                                </WordTool>
                                <ChevronSlot $ml={9}><Chevron /></ChevronSlot>
                            </ToolRow>
                            <ToolRow $ml={11} $h={22.5}>
                                <WordTool>
                                    <SmallGridIcon badge="format" />
                                    格式
                                </WordTool>
                                <ChevronSlot $ml={3}><Chevron /></ChevronSlot>
                            </ToolRow>
                        </ToolRows>
                    </GroupBody>
                    <GroupFooter>
                        <GroupLabel>单元格</GroupLabel>
                    </GroupFooter>
                </Group>

                <Group $w={184}>
                    <GroupBody $row>
                        <ToolRows $top={0} $gap={0}>
                            <ToolRow $ml={11} $h={22.5}>
                                <svg width="16" height="14" viewBox="0 0 16 14">
                                    <path d="M15 3V1H2l6 6-6 6h13v-2" fill="none" stroke="#444" strokeWidth="2" />
                                </svg>
                                <ChevronSlot $ml={5}><Chevron /></ChevronSlot>
                            </ToolRow>
                            <ToolRow $ml={12} $h={22.5}>
                                <svg width="14" height="16" viewBox="0 0 14 16">
                                    <rect x=".5" y=".5" width="13" height="15" fill="#fff" stroke="#777" />
                                    <rect x="0" y="0" width="14" height="3" fill="#666" />
                                    <path d="M7 5v8M3.500 9.500L7 13l3.500-3.500" fill="none" stroke="#2c6cb8" strokeWidth="2" />
                                </svg>
                                <ChevronSlot $ml={4}><Chevron /></ChevronSlot>
                            </ToolRow>
                            <ToolRow $ml={12} $h={22.5}>
                                <svg width="14" height="13" viewBox="0 0 14 13">
                                    <path d="M0 9l8-8c1-1 2-1 3 0l2 2c1 1 1 2 0 3l-6 6H3z" fill="#e98a98" />
                                </svg>
                                <ChevronSlot $ml={4}><Chevron /></ChevronSlot>
                            </ToolRow>
                        </ToolRows>
                        <LargeButton $w={60} $ml={8}>
                            <LargeIcon>
                                <SortIcon>
                                    <GlyphStack>
                                        <Glyph $size={15} $bold $color="#3f78bb">A</Glyph>
                                        <Glyph $size={15} $bold $color="#9a5fb8">Z</Glyph>
                                    </GlyphStack>
                                    <svg width="19" height="19" viewBox="0 0 19 19">
                                        <path d="M.5.5h18l-7 8v9h-4v-9z" fill="#d8d8d8" stroke="#777" />
                                    </svg>
                                </SortIcon>
                            </LargeIcon>
                            <LabelLine>排序和筛选</LabelLine>
                            <LabelLine><Chevron /></LabelLine>
                        </LargeButton>
                        <LargeButton $w={60} $ml={5}>
                            <LargeIcon>
                                <svg width="30" height="30" viewBox="0 0 30 30">
                                    <circle cx="18" cy="11" r="9.500" fill="#fff" stroke="#4a8bc8" strokeWidth="2.500" />
                                    <path d="M11 18L2 27" stroke="#4a8bc8" strokeWidth="3.500" strokeLinecap="round" />
                                </svg>
                            </LargeIcon>
                            <LabelLine>查找和选择</LabelLine>
                            <LabelLine><Chevron /></LabelLine>
                        </LargeButton>
                    </GroupBody>
                    <GroupFooter>
                        <GroupLabel>编辑</GroupLabel>
                    </GroupFooter>
                </Group>

                <Group $w={58}>
                    <GroupBody $row>
                        <LargeButton $w={57}>
                            <LargeIcon>
                                <svg width="29" height="30" viewBox="0 0 29 30">
                                    <rect x="0" y="0" width="13" height="8" rx="1" fill="#3b93ec" />
                                    <rect x=".5" y="10.500" width="12" height="17" rx="1" fill="#fff" stroke="#999" />
                                    <rect x="15.500" y=".5" width="12" height="17" rx="1" fill="#fff" stroke="#999" />
                                    <rect x="15" y="20" width="13" height="8" rx="1" fill="#f7931e" />
                                </svg>
                            </LargeIcon>
                            <LabelLine>模板</LabelLine>
                        </LargeButton>
                    </GroupBody>
                    <GroupFooter>
                        <GroupLabel>模板中心</GroupLabel>
                    </GroupFooter>
                </Group>

                <CollapseSlot>
                    <svg width="11" height="7" viewBox="0 0 11 7">
                        <path d="M1 6l4.500-4.500L10 6" fill="none" stroke="#444" strokeWidth="1.200" />
                    </svg>
                </CollapseSlot>
            </Ribbon>
            <Shadow />

            <FormulaBar>
                <NameBox>
                    <span>H11</span>
                    <Caret />
                </NameBox>
                <GripSlot>
                    <svg width="3" height="11" viewBox="0 0 3 11">
                        <path d="M1.500 0v2M1.500 4.500v2M1.500 9v2" stroke="#999" strokeWidth="2" />
                    </svg>
                </GripSlot>
                <FormulaButtons>
                    <svg width="11" height="11" viewBox="0 0 11 11">
                        <path d="M.5.5l10 10M10.500.5l-10 10" stroke="#c4c4c4" strokeWidth="1.500" />
                    </svg>
                    <svg width="13" height="11" viewBox="0 0 13 11">
                        <path d="M1 6l4 4 7-9" fill="none" stroke="#c4c4c4" strokeWidth="2" />
                    </svg>
                    <FxText>fx</FxText>
                </FormulaButtons>
                <FormulaInput>
                    <Chevron />
                </FormulaInput>
            </FormulaBar>

            <SheetArea>
                <SheetMain>
                    <ColumnHeader>
                        <Corner>
                            <svg width="16" height="16" viewBox="0 0 16 16">
                                <path d="M16 0v16H0z" fill="#b5b5b5" />
                            </svg>
                        </Corner>
                        {columns.map((col) => (
                            <ColumnCell key={col} $w={117}>
                                {col}
                            </ColumnCell>
                        ))}
                    </ColumnHeader>
                    <SheetBody>
                        <RowHeader>
                            {rowNumbers.map((n) => (
                                <RowCell key={n}>{n === 22 ? '' : n}</RowCell>
                            ))}
                        </RowHeader>
                        <Canvas>
                            <DataTable>
                                <DataCell $head>标签名称</DataCell>
                                {subjects.map((subject, i) => (
                                    <DataCell key={i}>{subject}</DataCell>
                                ))}
                            </DataTable>
                        </Canvas>
                    </SheetBody>
                </SheetMain>
                <VScroll>
                    <ScrollButton $h={15}>
                        <svg width="8" height="5" viewBox="0 0 8 5">
                            <path d="M0 5l4-5 4 5z" fill="#777" />
                        </svg>
                    </ScrollButton>
                    <ScrollTrack $flex={80} />
                    <ScrollThumb $flex={474} />
                    <ScrollButton $h={14}>
                        <svg width="8" height="5" viewBox="0 0 8 5">
                            <path d="M0 0l4 5 4-5z" fill="#777" />
                        </svg>
                    </ScrollButton>
                </VScroll>
            </SheetArea>

            <SheetTabs>
                <TabNav>
                    <svg width="5" height="8" viewBox="0 0 5 8">
                        <path d="M5 0v8L0 4z" fill="#c4c4c4" />
                    </svg>
                    <svg width="5" height="8" viewBox="0 0 5 8">
                        <path d="M0 0v8l5-4z" fill="#c4c4c4" />
                    </svg>
                </TabNav>
                <SheetTab>Sheet1</SheetTab>
                <AddSheet>
                    <svg width="17" height="17" viewBox="0 0 17 17">
                        <circle cx="8.500" cy="8.500" r="7.500" fill="none" stroke="#777" strokeWidth="1.200" />
                        <path d="M4.500 8.500h8M8.500 4.500v8" stroke="#777" strokeWidth="1.500" />
                    </svg>
                </AddSheet>
                <GripRight>
                    <svg width="3" height="11" viewBox="0 0 3 11">
                        <path d="M1.500 0v2M1.500 4.500v2M1.500 9v2" stroke="#999" strokeWidth="2" />
                    </svg>
                </GripRight>
                <HScroll>
                    <ScrollButton $w={15} $h={15}>
                        <svg width="5" height="8" viewBox="0 0 5 8">
                            <path d="M5 0v8L0 4z" fill="#666" />
                        </svg>
                    </ScrollButton>
                    <ScrollThumb $flex={437} />
                    <ScrollTrack $flex={45} />
                    <ScrollButton $w={14} $h={15}>
                        <svg width="5" height="8" viewBox="0 0 5 8">
                            <path d="M0 0v8l5-4z" fill="#666" />
                        </svg>
                    </ScrollButton>
                </HScroll>
            </SheetTabs>

            <StatusBar>
                <span>就绪</span>
                <StatusRight>
                    <ViewButton $active>
                        <svg width="14" height="14" viewBox="0 0 14 14">
                            <path d="M.5.5h13v13H.5zM5 .5v13M9.500.5v13M.5 5h13M.5 9.500h13" fill="none" stroke="#555" />
                        </svg>
                    </ViewButton>
                    <ViewButton>
                        <svg width="14" height="14" viewBox="0 0 14 14">
                            <path d="M.5.5h13v13H.5zM3.500 3.500h7v10h-7zM5 6h4M5 8.500h4M5 11h4" fill="none" stroke="#555" />
                        </svg>
                    </ViewButton>
                    <ViewButton>
                        <svg width="14" height="14" viewBox="0 0 14 14">
                            <path d="M.5.5h13v13H.5zM.5 8.500h5V.5M9.500.5v8h4" fill="none" stroke="#555" />
                        </svg>
                    </ViewButton>
                    <ZoomSlider>
                        <svg width="128" height="11" viewBox="0 0 128 11">
                            <path d="M0 5h8M118 5h9M122.500 1v9" stroke="#555" />
                            <path d="M14 5.500h100" stroke="#b5b5b5" />
                            <path d="M64 3v5" stroke="#b5b5b5" />
                            <rect x="67" y="0" width="5" height="11" fill="#666" />
                        </svg>
                    </ZoomSlider>
                    <ZoomText>130%</ZoomText>
                </StatusRight>
            </StatusBar>

            <ClickMark />
            <CursorMark width="15" height="21" viewBox="0 0 15 21">
                <path d="M1 1v15l4-3.500 3 7 3-1.500-3-6.500h5z" fill="#fff" stroke="#000" strokeWidth="1" />
            </CursorMark>
        </Page>
    );
};

export default App;
